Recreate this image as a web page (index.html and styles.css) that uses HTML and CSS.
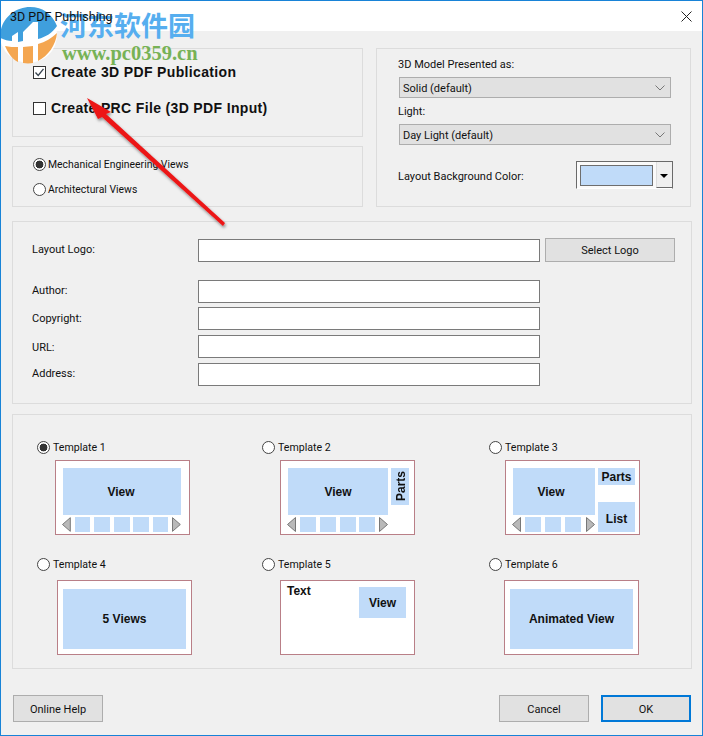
FILE: index.html
```html
<!DOCTYPE html>
<html>
<head>
    <meta charset="UTF-8">
    <title>3D PDF Publishing</title>
    <link rel="stylesheet" href="styles.css">
</head>
<body>
    <div class="window">
        <div class="titlebar">
            <span class="title">3D PDF Publishing</span>
            <svg class="close" width="11" height="11" viewBox="0 0 11 11"><path d="M0.5 0.5L10.5 10.5M10.5 0.5L0.5 10.5" stroke="#222" fill="none"/></svg>
        </div>

        <div class="top-row">
            <div class="left-col">
                <div class="panel output-panel">
                    <div class="check-row">
                        <span class="check"><svg width="11" height="11" viewBox="0 0 11 11"><path d="M1.5 5.5L4.2 8.5L9.5 1.8" stroke="#36424e" stroke-width="1.3" fill="none"/></svg></span>
                        <span>Create 3D PDF Publication</span>
                    </div>
                    <div class="check-row">
                        <span class="check"></span>
                        <span>Create PRC File (3D PDF Input)</span>
                    </div>
                </div>
                <div class="panel views-panel">
                    <label class="radio-row"><input type="radio" name="views" checked>Mechanical Engineering Views</label>
                    <label class="radio-row"><input type="radio" name="views">Architectural Views</label>
                </div>
            </div>

            <div class="panel model-panel">
                <div class="field-label">3D Model Presented as:</div>
                <div class="select">
                    <span>Solid (default)</span>
                    <svg width="10" height="6" viewBox="0 0 10 6"><path d="M0.5 0.5L5 5L9.5 0.5" stroke="#777" fill="none"/></svg>
                </div>
                <div class="field-label">Light:</div>
                <div class="select">
                    <span>Day Light (default)</span>
                    <svg width="10" height="6" viewBox="0 0 10 6"><path d="M0.5 0.5L5 5L9.5 0.5" stroke="#777" fill="none"/></svg>
                </div>
                <div class="color-row">
                    <span>Layout Background Color:</span>
                    <div class="color-picker">
                        <span class="color-swatch"></span>
                        <span class="color-arrow"></span>
                    </div>
                </div>
            </div>
        </div>

        <div class="panel info-panel">
            <div class="info-row logo-row">
                <label>Layout Logo:</label>
                <input type="text">
                <button class="btn select-logo">Select Logo</button>
            </div>
            <div class="info-row author-row">
                <label>Author:</label>
                <input type="text">
            </div>
            <div class="info-row">
                <label class="label-mid">Copyright:</label>
                <input type="text">
            </div>
            <div class="info-row">
                <label class="label-low">URL:</label>
                <input type="text">
            </div>
            <div class="info-row">
                <label>Address:</label>
                <input type="text">
            </div>
        </div>

        <div class="panel template-panel">
            <div class="template">
                <label class="radio-row"><input type="radio" name="tpl" checked>Template 1</label>
                <div class="thumb">
                    <div class="tmain w118">
                        <div class="view h47 view-left">View</div>
                        <div class="strip">
                            <svg width="9" height="15" viewBox="0 0 9 15"><path d="M8.5 0.5V14.5L0.5 7.5Z" fill="#b9b9b9" stroke="#777"/></svg>
                            <span class="sq"></span><span class="sq"></span><span class="sq"></span><span class="sq tight"></span><span class="sq"></span>
                            <svg width="9" height="15" viewBox="0 0 9 15"><path d="M0.5 0.5V14.5L8.5 7.5Z" fill="#b9b9b9" stroke="#777"/></svg>
                        </div>
                    </div>
                </div>
            </div>
            <div class="template">
                <label class="radio-row"><input type="radio" name="tpl">Template 2</label>
                <div class="thumb">
                    <div class="tmain w100">
                        <div class="view h47">View</div>
                        <div class="strip">
                            <svg width="9" height="15" viewBox="0 0 9 15"><path d="M8.5 0.5V14.5L0.5 7.5Z" fill="#b9b9b9" stroke="#777"/></svg>
                            <span class="sq"></span><span class="sq"></span><span class="sq"></span><span class="sq tight"></span>
                            <svg width="9" height="15" viewBox="0 0 9 15"><path d="M0.5 0.5V14.5L8.5 7.5Z" fill="#b9b9b9" stroke="#777"/></svg>
                        </div>
                    </div>
                    <div class="view parts-side"><span>Parts</span></div>
                </div>
            </div>
            <div class="template tpl-third">
                <label class="radio-row"><input type="radio" name="tpl">Template 3</label>
                <div class="thumb">
                    <div class="tmain w82">
                        <div class="view h47 view-left-more">View</div>
                        <div class="strip">
                            <svg width="9" height="15" viewBox="0 0 9 15"><path d="M8.5 0.5V14.5L0.5 7.5Z" fill="#b9b9b9" stroke="#777"/></svg>
                            <span class="sq"></span><span class="sq"></span><span class="sq"></span>
                            <svg class="arrow-wide" width="9" height="15" viewBox="0 0 9 15"><path d="M0.5 0.5V14.5L8.5 7.5Z" fill="#b9b9b9" stroke="#777"/></svg>
                        </div>
                    </div>
                    <div class="side-col">
                        <div class="view parts-top">Parts</div>
                        <div class="view list">List</div>
                    </div>
                </div>
            </div>

            <div class="template tpl-low tpl-four">
                <label class="radio-row"><input type="radio" name="tpl">Template 4</label>
                <div class="thumb thumb-full">
                    <div class="view full">5 Views</div>
                </div>
            </div>
            <div class="template tpl-low">
                <label class="radio-row"><input type="radio" name="tpl">Template 5</label>
                <div class="thumb thumb-text">
                    <span class="thumb-label">Text</span>
                    <div class="view small">View</div>
                </div>
            </div>
            <div class="template tpl-low tpl-six">
                <label class="radio-row"><input type="radio" name="tpl">Template 6</label>
                <div class="thumb thumb-full">
                    <div class="view full">Animated View</div>
                </div>
            </div>
        </div>

        <div class="footer">
            <button class="btn">Online Help</button>
            <div class="footer-right">
                <button class="btn">Cancel</button>
                <button class="btn btn-default">OK</button>
            </div>
        </div>

        <!-- site watermark + annotation arrow pasted over the dialog -->
        <div class="watermark">
            <svg class="wm-logo" width="64" height="60" viewBox="0 0 64 60">
                <ellipse cx="28.500" cy="31" rx="28.500" ry="28" fill="white"/>
                <!-- blue top of the disc, the two "1" bars stay white -->
                <path d="M0 33C0 16 14 3 30 3C43 3 52 10 57 22C52 29 46 33 38 35V18H33L23 28V37L18 38V28L12 32V37C8 37 4 35.500 0.500 34Z" fill="#3f9fdd"/>
                <!-- orange bottom, split by white stripes -->
                <path d="M5 42C9 43 14 43 18 43V58C12 55 8 49 5 42Z" fill="#f4a650"/>
                <path d="M23 43C26 43 30 42 33 42V59C30 59.500 26 59.500 23 59Z" fill="#f4a650"/>
                <path d="M38 40C45 38 52 34 57 29C56 41 48 52 38 57Z" fill="#f4a650"/>
            </svg>
            <span class="wm-cn">河东软件园</span>
            <span class="wm-url">www.pc0359.cn</span>
        </div>
        <svg class="red-arrow" width="160" height="150" viewBox="0 0 160 150">
            <defs>
                <filter id="arrowShadow" x="-10%" y="-10%" width="125%" height="125%">
                    <feDropShadow dx="1" dy="2" stdDeviation="1.5" flood-color="#000" flood-opacity="0.45"/>
                </filter>
            </defs>
            <path d="M7 8L31 22L26 24L145 133L143 136L22 27L18 29Z" fill="#ec1416" filter="url(#arrowShadow)"/>
        </svg>
    </div>
</body>
</html>
```

FILE: styles.css
```css
* {
    box-sizing: border-box;
}

body {
    margin: 0;
    font-family: Roboto, "Liberation Sans", sans-serif;
    font-size: 11px;
    color: #111;
}

.window {
    position: relative;
    width: 703px;
    height: 736px;
    padding: 0 10px 0 11px;
    background-color: #f0f0f0;
    border: 1px solid #1883d7;
    overflow: hidden;
}

.titlebar {
    display: flex;
    align-items: center;
    justify-content: space-between;
    height: 30px;
    margin: 0 -10px 17px -11px;
    padding: 0 10px 0 9px;
    background-color: white;
    font-size: 12.5px;
}

/* title shows through the watermark in the screenshot */
.title {
    position: relative;
    z-index: 2;
}

.panel {
    background-color: #f0f0f0;
    border: 1px solid #dcdcdc;
}

.top-row {
    display: flex;
    justify-content: space-between;
    width: 679px;
}

.left-col {
    width: 351px;
}

.output-panel {
    height: 89px;
    margin-bottom: 9px;
    padding: 13px 0 0 20px;
}

.check-row {
    display: flex;
    align-items: center;
    gap: 5px;
    height: 20px;
    margin-bottom: 16px;
    font-family: "Liberation Sans", Arial, sans-serif;
    font-size: 14px;
    font-weight: bold;
    letter-spacing: 0.35px;
}

.check {
    width: 13px;
    height: 13px;
    background-color: white;
    border: 1px solid #333;
}

.check svg {
    display: block;
}

.views-panel {
    height: 61px;
    padding: 7px 0 0 20px;
    font-size: 10.4px;
}

.radio-row {
    display: flex;
    align-items: center;
    gap: 2px;
    height: 20px;
    margin-bottom: 5px;
}

input[type="radio"] {
    appearance: none;
    width: 13px;
    height: 13px;
    margin: 0;
    background-color: white;
    border: 1px solid #444;
    border-radius: 50%;
}

input[type="radio"]:checked {
    background: radial-gradient(circle, #333 0, #333 3.6px, white 4.2px);
}

.model-panel {
    width: 315px;
    height: 159px;
    padding: 7px 0 0 21px;
}

.field-label {
    height: 16px;
    line-height: 16px;
    margin-bottom: 5px;
    padding-top: 1px;
}

.select {
    display: flex;
    align-items: center;
    justify-content: space-between;
    width: 272px;
    height: 21px;
    margin: 0 0 5px 1px;
    padding: 0 5px 0 3px;
    background-color: #e1e1e1;
    border: 1px solid #adadad;
}

.select span {
    padding-top: 1px;
}

.color-row {
    display: flex;
    align-items: center;
    justify-content: space-between;
    width: 275px;
    height: 28px;
    margin-top: 16px;
}

.color-row > span {
    padding-top: 2px;
}

.color-picker {
    display: flex;
    width: 97px;
    height: 28px;
    padding: 3px 0 2px 3px;
    background-color: #fafafa;
    border: 1px solid #6a6a6a;
    border-bottom-color: white;
}

.color-swatch {
    width: 73px;
    height: 21px;
    margin-right: 3px;
    background-color: #c0dbf9;
    border: 1px solid #6e6e6e;
}

.color-arrow {
    position: relative;
    flex: 1;
    margin: -3px 0 -2px;
    background-color: #f0f0f0;
    border-left: 1px solid #ddd;
    border-bottom: 1px solid #6a6a6a;
}

.color-arrow::after {
    content: "";
    position: absolute;
    left: 3px;
    top: 12px;
    border-top: 4px solid black;
    border-left: 4px solid transparent;
    border-right: 4px solid transparent;
}

.info-panel {
    width: 680px;
    height: 183px;
    margin-top: 14px;
    padding: 17px 0 0 19px;
}

.info-row {
    display: flex;
    align-items: center;
    height: 23px;
    margin-bottom: 5px;
}

.info-row label {
    width: 166px;
    padding-bottom: 3px;
}

.info-row .label-mid {
    padding-bottom: 1px;
}

.info-row .label-low {
    padding: 1px 0 0;
}

.info-row input {
    width: 342px;
    height: 23px;
    background-color: white;
    border: 1px solid #7a7a7a;
}

.logo-row {
    margin-bottom: 18px;
}

.author-row {
    margin-bottom: 4px;
}

.btn {
    width: 90px;
    height: 27px;
    padding: 1px 0 0;
    font-family: inherit;
    font-size: 11px;
    color: #111;
    background-color: #e1e1e1;
    border: 1px solid #adadad;
}

.select-logo {
    width: 130px;
    height: 24px;
    margin: -1px 0 0 5px;
    padding: 0;
}

.template-panel {
    display: grid;
    grid-template-columns: 225px 227px 1fr;
    grid-auto-rows: min-content;
    row-gap: 22px;
    width: 680px;
    height: 255px;
    margin-top: 10px;
    padding: 25px 0 0 24px;
}

.template .radio-row {
    gap: 3px;
    height: 14px;
    margin-bottom: 6px;
    font-size: 10.6px;
}

.tpl-low .radio-row {
    margin-bottom: 9px;
}

.thumb {
    display: flex;
    gap: 3px;
    width: 135px;
    height: 75px;
    margin-left: 18px;
    padding: 7px 0 0 7px;
    background-color: white;
    border: 1px solid #b97f87;
    font-family: "Liberation Sans", Arial, sans-serif;
    font-size: 12px;
    font-weight: bold;
}

.tpl-third .thumb {
    margin-left: 16px;
}

.tpl-four .thumb {
    margin-left: 20px;
}

.tpl-six .thumb {
    margin-left: 15px;
}

.view {
    display: flex;
    align-items: center;
    justify-content: center;
    background-color: #c0dbf9;
}

.h47 {
    height: 47px;
    padding-top: 1px;
}

.view-left {
    padding-right: 2px;
}

.view-left-more {
    padding-right: 6px;
}

.w118 {
    width: 118px;
}

.w100 {
    width: 100px;
}

.w82 {
    width: 82px;
}

.strip {
    display: flex;
    gap: 4px;
    height: 15px;
    margin: 2px 0 0 -1px;
}

.sq {
    width: 16px;
    background-color: #c0dbf9;
}

.tight {
    margin-left: -1px;
}

.arrow-wide {
    margin-left: 1px;
}

.parts-side {
    width: 18px;
    height: 37px;
    padding-left: 1px;
}

.parts-side span {
    writing-mode: vertical-rl;
    transform: rotate(180deg);
}

.side-col {
    display: flex;
    flex-direction: column;
    justify-content: space-between;
    width: 37px;
    height: 64px;
}

.parts-top {
    height: 17px;
}

.list {
    height: 30px;
    padding-top: 3px;
}

.thumb-full {
    padding: 8px 0 0 5px;
}

.full {
    width: 123px;
    height: 60px;
}

.thumb-text {
    justify-content: space-between;
    padding: 6px 8px 0 6px;
}

.thumb-label {
    line-height: 9px;
}

.small {
    width: 47px;
    height: 31px;
}

.footer {
    display: flex;
    justify-content: space-between;
    width: 678px;
    margin: 26px 0 0 1px;
}

.footer-right {
    display: flex;
    gap: 12px;
}

.btn-default {
    border: 2px solid #0078d7;
}

.watermark {
    position: absolute;
    left: -1px;
    top: 3px;
    width: 200px;
    height: 62px;
}

.wm-logo {
    position: absolute;
    left: 0;
    top: 0;
}

.wm-cn {
    position: absolute;
    left: 60px;
    top: 6px;
    font-family: "Noto Sans CJK SC", sans-serif;
    font-size: 27px;
    line-height: 30px;
    font-weight: bold;
    color: #56aeef;
    white-space: nowrap;
}

.wm-url {
    position: absolute;
    left: 62px;
    top: 39px;
    font-family: "Liberation Serif", serif;
    font-size: 20.5px;
    line-height: 20px;
    font-weight: bold;
    color: #77b255;
    white-space: nowrap;
}

.red-arrow {
    position: absolute;
    left: 79px;
    top: 89px;
}
```
